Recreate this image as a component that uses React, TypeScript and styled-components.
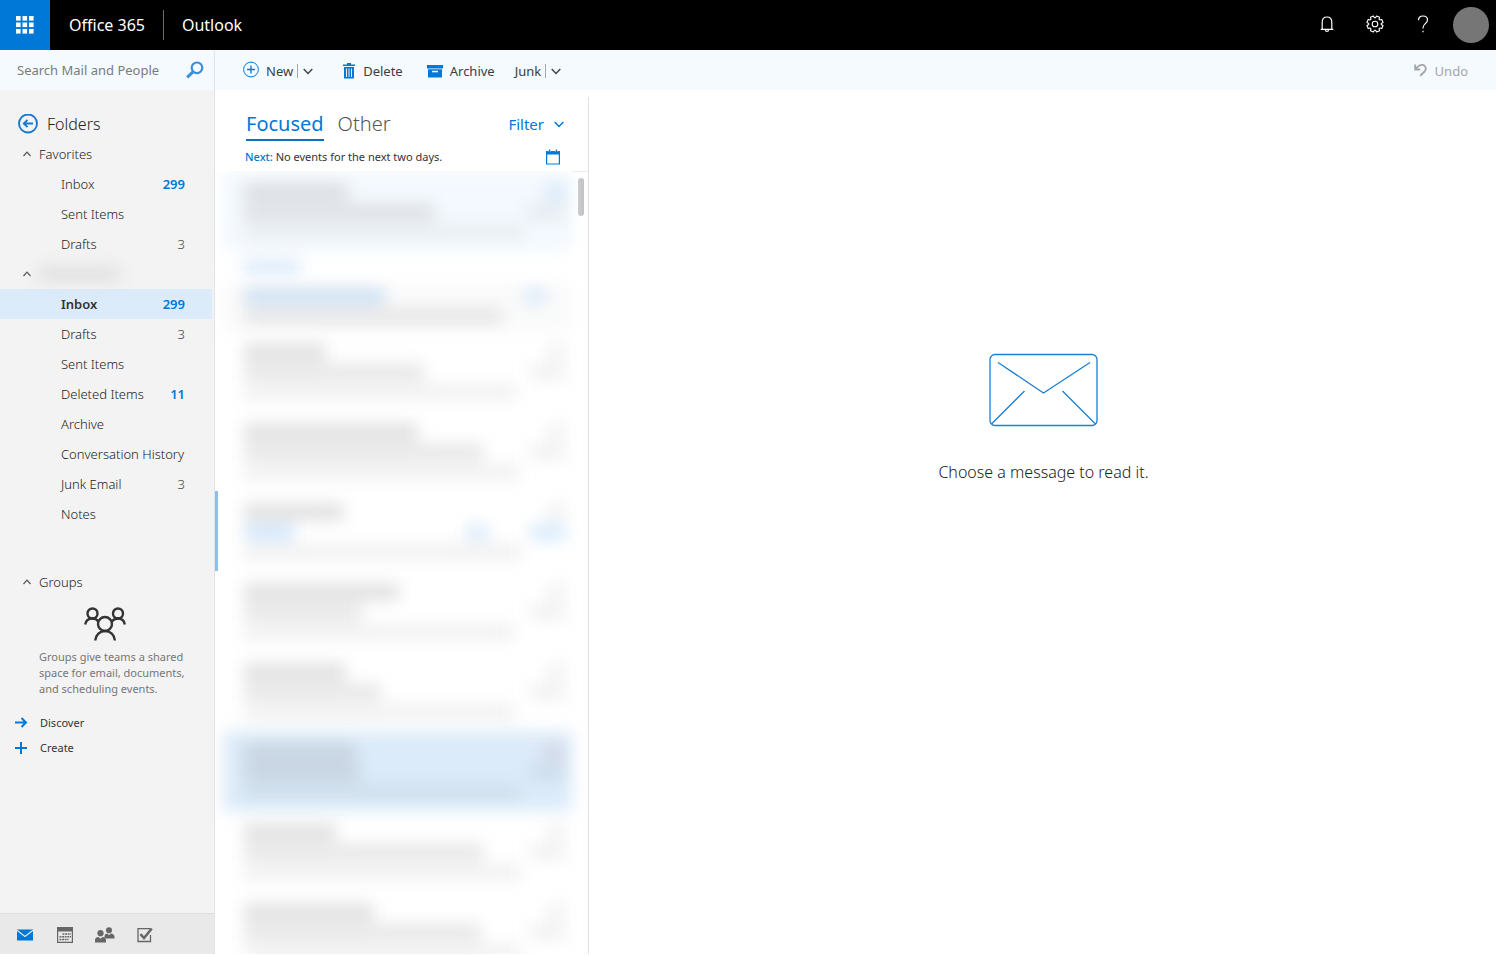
import React from "react";
import styled, { createGlobalStyle, css } from "styled-components";

const BLUE = "#0078d7";
const INK = "#444444";

const GlobalStyle = createGlobalStyle`
  * { box-sizing: border-box; }
  html, body, #root { height: 100%; }
  body {
    margin: 0;
    background: #ffffff;
    color: ${INK};
    font-family: "Noto Sans", "Open Sans", sans-serif;
    font-size: 13px;
    line-height: 20px;
  }
  button, input { font: inherit; color: inherit; }
  button { padding: 0; border: 0; background: none; cursor: pointer; }
  a { color: inherit; text-decoration: none; }
  ul { margin: 0; padding: 0; list-style: none; }
  h1, h2, p { margin: 0; font-weight: 400; }
  svg { display: block; flex: none; }
`;

const Shell = styled.div`
  display: flex;
  flex-direction: column;
  height: 100vh;
  padding-bottom: 2px;
`;

/* ---------- suite header ---------- */

const SuiteBar = styled.header`
  display: flex;
  align-items: center;
  flex: none;
  height: 50px;
  background: #000000;
  color: #ffffff;
`;

const Launcher = styled.button`
  display: flex;
  align-items: center;
  justify-content: center;
  width: 50px;
  height: 50px;
  background: ${BLUE};
`;

const SuiteLink = styled.a`
  padding: 0 18px 0 19px;
  font-size: 16px;
  line-height: 30px;
`;

const SuiteName = styled.h1`
  padding-left: 18px;
  border-left: 1px solid #6b6b6b;
  font-size: 16px;
  line-height: 30px;
`;

const SuiteActions = styled.div`
  display: flex;
  align-items: center;
  margin-left: auto;
  padding-right: 7px;
`;

const SuiteButton = styled.button`
  display: flex;
  align-items: center;
  justify-content: center;
  width: 48px;
  height: 50px;
  padding-bottom: 3px;
`;

const Avatar = styled.button`
  width: 36px;
  height: 36px;
  margin-left: 6px;
  border-radius: 50%;
  background: #767676;
`;

/* ---------- page body ---------- */

const Body = styled.div`
  display: flex;
  flex: 1;
  min-height: 0;
`;

const Sidebar = styled.aside`
  display: flex;
  flex-direction: column;
  flex: none;
  width: 215px;
  border-right: 1px solid #e1e3e6;
  background: #f3f3f3;
`;

const SearchBox = styled.form`
  display: flex;
  align-items: center;
  flex: none;
  height: 40px;
  padding: 0 10px 0 17px;
  background: #f4faff;
`;

const SearchInput = styled.input`
  flex: 1;
  min-width: 0;
  padding: 0;
  border: 0;
  outline: 0;
  background: transparent;
  &::placeholder { color: #7a7a7a; opacity: 1; }
`;

const FolderNav = styled.nav`
  flex: 1;
  min-height: 0;
  padding-top: 19px;
  overflow: hidden;
  font-weight: 300;
  color: #222222;
`;

const BackButton = styled.button`
  display: flex;
  align-items: center;
  gap: 9px;
  height: 30px;
  padding-left: 18px;
  font-size: 16px;
`;

const GroupToggle = styled.button`
  display: flex;
  align-items: center;
  gap: 8px;
  width: 100%;
  height: 30px;
  padding-left: 23px;
`;

const AccountName = styled.span`
  width: 80px;
  height: 12px;
  background: #dcdcdc;
  filter: blur(8px);
`;

const FolderLink = styled.a<{ $active?: boolean }>`
  display: flex;
  align-items: center;
  justify-content: space-between;
  height: 30px;
  margin-right: 2px;
  padding: 0 27px 0 61px;
  white-space: nowrap;
  ${(p) => p.$active && css`
    background: #dcebf9;
    color: #333333;
    font-weight: 600;
  `}
`;

const Count = styled.span<{ $unread?: boolean }>`
  color: ${(p) => (p.$unread ? BLUE : "#444444")};
  font-weight: ${(p) => (p.$unread ? 600 : 300)};
`;

const Groups = styled.section`
  padding-top: 38px;
`;

const GroupArt = styled.div`
  display: flex;
  justify-content: center;
  padding: 10px 4px 8px 0;
`;

const GroupText = styled.p`
  padding: 0 20px 13px 39px;
  color: #767676;
  font-size: 11px;
  line-height: 16px;
`;

const GroupAction = styled.button`
  display: flex;
  align-items: center;
  gap: 12px;
  height: 25px;
  padding-left: 14px;
  color: #333333;
  font-size: 11px;
  font-weight: 400;
`;

const ModuleBar = styled.nav`
  display: flex;
  align-items: center;
  gap: 20px;
  flex: none;
  height: 41px;
  padding: 2px 15px 0;
  border-top: 1px solid #dddddd;
  background: #e9e9e9;
`;

const ModuleLink = styled.a`
  display: flex;
  align-items: center;
  justify-content: center;
  width: 20px;
  height: 20px;
`;

/* ---------- main area ---------- */

const Main = styled.main`
  display: flex;
  flex-direction: column;
  flex: 1;
  min-width: 0;
`;

const CommandBar = styled.div`
  display: flex;
  align-items: center;
  flex: none;
  height: 40px;
  padding: 2px 28px 0;
  background: #f4faff;
  color: #3c3c3c;
`;

const Command = styled.button<{ $gap?: number; $after?: number }>`
  display: flex;
  align-items: center;
  gap: ${(p) => p.$gap ?? 8}px;
  margin-right: ${(p) => p.$after ?? 0}px;
`;

const SplitArrow = styled.button`
  display: flex;
  align-items: center;
  height: 14px;
  margin: 0 30px 0 4px;
  padding-left: 5px;
  border-left: 1px solid #a6a6a6;
`;

const UndoCommand = styled(Command)`
  margin-left: auto;
  color: #a6a6a6;
`;

const Panes = styled.div`
  display: flex;
  flex: 1;
  min-height: 0;
  padding-top: 7px;
`;

const ListPane = styled.section`
  display: flex;
  flex-direction: column;
  flex: none;
  width: 374px;
  border-right: 1px solid #e1e1e1;
`;

const ListHeader = styled.div`
  display: flex;
  align-items: flex-start;
  flex: none;
  height: 48px;
  padding: 12px 24px 0 31px;
`;

const Tab = styled.button<{ $active?: boolean }>`
  height: 32px;
  margin-right: 14px;
  border-bottom: 2px solid ${(p) => (p.$active ? "#106ebe" : "transparent")};
  color: ${(p) => (p.$active ? BLUE : "#555555")};
  font-size: 20px;
  font-weight: ${(p) => (p.$active ? 400 : 300)};
  line-height: 30px;
`;

const FilterButton = styled.button`
  display: flex;
  align-items: center;
  gap: 10px;
  height: 30px;
  margin-left: auto;
  color: ${BLUE};
  font-size: 15px;
`;

const Agenda = styled.div`
  display: flex;
  align-items: center;
  justify-content: space-between;
  flex: none;
  height: 26px;
  padding: 0 28px 2px 30px;
  color: #333333;
  font-size: 11px;
`;

const AgendaLabel = styled.b`
  color: ${BLUE};
  font-weight: 500;
`;

const ListViewport = styled.div`
  display: flex;
  flex: 1;
  min-height: 0;
  overflow: hidden;
`;

const MessageList = styled.ul`
  flex: 1;
  min-width: 0;
`;

const ScrollTrack = styled.div`
  flex: none;
  width: 16px;
  padding: 6px 4px 0 6px;
  border-top: 1px solid #eaeaea;
`;

const ScrollThumb = styled.div`
  height: 38px;
  border-radius: 3px;
  background: #c1c1c1;
`;

const MessageItem = styled.li<{ $marked?: boolean; $height?: number }>`
  display: grid;
  grid-template-columns: 3px 1fr;
  height: ${(p) => p.$height ?? 80}px;
  &::before {
    content: "";
    background: ${(p) => (p.$marked ? "#8fbfe9" : "transparent")};
  }
`;

const Redacted = styled.div<{ $fill?: string; $pad?: number }>`
  display: flex;
  flex-direction: column;
  margin-left: 5px;
  padding: ${(p) => p.$pad ?? 11}px 6px 0 21px;
  background: ${(p) => p.$fill ?? "transparent"};
  filter: blur(8px);
`;

const RedactedLine = styled.div`
  display: flex;
  align-items: center;
  justify-content: space-between;
  height: 20px;
`;

const Smudge = styled.span<{ $w: number; $tone: string }>`
  width: ${(p) => p.$w}px;
  height: 16px;
  background: ${(p) => p.$tone};
`;

const MidSmudge = styled(Smudge)<{ $gap: number }>`
  margin: 0 ${(p) => p.$gap}px 0 auto;
`;

const ReadingPane = styled.section`
  display: flex;
  flex-direction: column;
  align-items: center;
  flex: 1;
  padding: 256px 0 0 2px;
`;

const EmptyText = styled.p`
  margin-top: 34px;
  color: #222222;
  font-size: 16px;
  font-weight: 300;
  line-height: 22px;
`;

/* ---------- icons ---------- */

const ChevronDown = ({ color = "#444444" }: { color?: string }) => (
  <svg width="10" height="7" viewBox="0 0 10 7" fill="none" stroke={color} strokeWidth="1.5">
    <path d="M.7 1 5 5.4 9.3 1" />
  </svg>
);

const ChevronUp = () => (
  <svg width="8" height="6" viewBox="0 0 8 6" fill="none" stroke="#555555" strokeWidth="1.2">
    <path d="M.5 5 4 1.2 7.5 5" />
  </svg>
);

const WaffleIcon = () => (
  <svg width="18" height="18" viewBox="0 0 18 18" fill="#ffffff">
    {[0, 6.5, 13].map((y) => [0, 6.5, 13].map((x) => <rect key={`${x}-${y}`} x={x} y={y} width="4.6" height="4.6" />))}
  </svg>
);

const BellIcon = () => (
  <svg width="16" height="18" viewBox="0 0 16 18" fill="none" stroke="#ffffff" strokeWidth="1.2">
    <path d="M1.700 14.400h12.600M3.200 14.200V7.200C3.200 3.800 5 2 8 2s4.800 1.800 4.800 5.200v7M6.300 14.600c.2 1.400.8 1.900 1.700 1.900s1.500-.5 1.700-1.900" />
  </svg>
);

const gearPath = (() => {
  const points: string[] = [];
  for (let i = 0; i < 8; i++) {
    const base = ((i + 0.5) * Math.PI) / 4;
    [[-0.3, 6.3], [-0.2, 8.2], [0.2, 8.2], [0.3, 6.3]].forEach(([a, r]) => {
      points.push(`${(9 + r * Math.cos(base + a)).toFixed(2)} ${(9 + r * Math.sin(base + a)).toFixed(2)}`);
    });
  }
  return `M${points.join("L")}Z`;
})();

const GearIcon = () => (
  <svg width="18" height="18" viewBox="0 0 18 18" fill="none" stroke="#ffffff" strokeWidth="1.1" strokeLinejoin="round">
    <path d={gearPath} />
    <circle cx="9" cy="9" r="2.8" />
  </svg>
);

const HelpIcon = () => (
  <svg width="12" height="18" viewBox="0 0 12 18" fill="none" stroke="#ffffff" strokeWidth="1.2">
    <path d="M1.500 5.300C1.500 2.500 3.300 1 6 1s4.500 1.500 4.500 4c0 3.600-4.500 3.700-4.500 7.700v.8M6 15.800v1.400" />
  </svg>
);

const SearchIcon = () => (
  <svg width="18" height="18" viewBox="0 0 18 18" fill="none" stroke="#3a8fdc">
    <circle cx="11" cy="6.800" r="5.300" strokeWidth="2.200" />
    <path d="M7.200 10.600 1.200 16.400" strokeWidth="3" />
  </svg>
);

const BackIcon = () => (
  <svg width="20" height="20" viewBox="0 0 20 20" fill="none" stroke="#1a78cf" strokeWidth="1.900">
    <circle cx="10" cy="9.500" r="9" />
    <path d="M15 9.500H6M9.500 5.800 5.800 9.500l3.700 3.700" />
  </svg>
);

const NewIcon = () => (
  <svg width="16" height="20" viewBox="0 0 16 20" fill="none" stroke={BLUE}>
    <circle cx="8" cy="8.500" r="7.400" />
    <path d="M8 4.500v8M4 8.500h8" strokeWidth="1.300" />
  </svg>
);

const TrashIcon = () => (
  <svg width="12" height="16" viewBox="0 0 12 16" fill={BLUE}>
    <path d="M4 0h4v1.500h4V3H0V1.500h4zM1 4h10v11.500H1z" />
    <path d="M3.500 5.500v8.500M6 5.500v8.500M8.500 5.500v8.500" stroke="#ffffff" strokeWidth=".9" />
  </svg>
);

const ArchiveIcon = () => (
  <svg width="16" height="14" viewBox="0 0 16 14" fill={BLUE}>
    <path d="M0 1h16v3.600H0zM1 5.300h14v8.200H1z" />
    <path d="M5 6.800h6v1.500H5z" fill="#ffffff" />
  </svg>
);

const UndoIcon = () => (
  <svg width="13" height="16" viewBox="0 0 13 16" fill="none" stroke="#a6a6a6" strokeWidth="1.900">
    <path d="M1.200 1.500v5h5M1.500 6.200C4 3 7 1.200 9.600 2.200c2.700 1.100 2.700 4.300 1 6.300L6.200 12.800" />
  </svg>
);

const AgendaIcon = () => (
  <svg width="14" height="16" viewBox="0 0 14 16">
    <path d="M.6 3h12.800v12H.6z" fill="none" stroke={BLUE} strokeWidth="1.200" />
    <path d="M0 2h14v3.500H0zM2.800.5h1.500V3H2.800zM9.700.5h1.500V3H9.700z" fill={BLUE} />
    <path d="M2.300 1.200v1.500M4.800 1.200v1.500M9.200 1.200v1.500M11.700 1.200v1.500" stroke="#ffffff" strokeWidth=".6" />
  </svg>
);

const PeopleArt = () => (
  <svg width="42" height="34" viewBox="0 0 42 34" fill="none" stroke="#333333" strokeWidth="2.400">
    <circle cx="8.500" cy="6.500" r="5" />
    <circle cx="34" cy="6.500" r="5" />
    <circle cx="21" cy="17" r="7" />
    <path d="M1.200 17.500c.6-3.800 3.500-6 7.300-6 2.600 0 4.600 1.200 5.800 3M40.800 17.500c-.6-3.800-3.300-6-6.800-6-2.600 0-4.900 1.200-6.200 3M11.200 33.500c.5-5.500 4.700-9.500 9.900-9.500s9.400 4 9.800 9.500" />
  </svg>
);

const ArrowIcon = () => (
  <svg width="14" height="12" viewBox="0 0 14 12" fill="none" stroke={BLUE} strokeWidth="2">
    <path d="M1 5.500h11M7.500 1 12 5.500 7.500 10" />
  </svg>
);

const PlusIcon = () => (
  <svg width="14" height="12" viewBox="0 0 14 12" fill="none" stroke={BLUE} strokeWidth="2">
    <path d="M7 0v12M1 6h12" />
  </svg>
);

const MailIcon = () => (
  <svg width="16" height="12" viewBox="0 0 16 12">
    <path d="M0 .5h16v11H0z" fill={BLUE} />
    <path d="M0 1.200 8 7.400l8-6.200" fill="none" stroke="#e9e9e9" strokeWidth="1.200" />
  </svg>
);

const CalendarIcon = () => (
  <svg width="16" height="16" viewBox="0 0 16 16">
    <path d="M.6.6h14.800v14.800H.6z" fill="none" stroke="#666666" strokeWidth="1.200" />
    <path d="M0 0h16v4.500H0z" fill="#666666" />
    <path d="M5.500 7h8.500M2.500 9.700H14M2.500 12.400h9" stroke="#666666" strokeWidth="1.500" strokeDasharray="1.900 .7" />
  </svg>
);

const PeopleIcon = () => (
  <svg width="20" height="16" viewBox="0 0 20 16" fill="#666666">
    <circle cx="14" cy="3.200" r="3" />
    <path d="M9.500 11V9.500c0-2 1.400-3 3-3l1.500 1.700 1.500-1.700c2.400 0 4 1.200 4 3.500v1.500h-8z" />
    <circle cx="5.500" cy="6.200" r="3.100" />
    <path d="M0 15.500V13c0-2 1.600-3 3.500-3l2 1.700 2-1.700c2 0 3.500 1.200 3.500 3v2.500z" />
  </svg>
);

const TasksIcon = () => (
  <svg width="16" height="16" viewBox="0 0 16 16" fill="none" stroke="#666666">
    <path d="M13.500 8v6.500H1V1.700h12.500" strokeWidth="1.300" />
    <path d="M3.500 7.200 7 11l7.800-9.500" strokeWidth="2.500" />
  </svg>
);

const EnvelopeArt = () => (
  <svg width="109" height="74" viewBox="0 0 109 74" fill="none" stroke="#1b7fd4" strokeWidth="1.300">
    <rect x="1" y="1.500" width="107" height="71" rx="5" />
    <path d="M9 9.500 54.500 40 101 9.500M35.500 38 2.500 71M73.500 38l33 33" />
  </svg>
);

/* ---------- data ---------- */

type Folder = { name: string; count?: number; unread?: boolean; active?: boolean };

const favorites: Folder[] = [
  { name: "Inbox", count: 299, unread: true },
  { name: "Sent Items" },
  { name: "Drafts", count: 3 },
];

const mailbox: Folder[] = [
  { name: "Inbox", count: 299, unread: true, active: true },
  { name: "Drafts", count: 3 },
  { name: "Sent Items" },
  { name: "Deleted Items", count: 11, unread: true },
  { name: "Archive" },
  { name: "Conversation History" },
  { name: "Junk Email", count: 3 },
  { name: "Notes" },
];

const GREY = "#dfdfdf";
const PALE = "#f1f1f1";
const SKY = "#dbebfb";
const NONE = "transparent";

/* one line of a redacted message: each part has a width and a tone */
type Part = { w: number; tone: string };
type Line = { left: Part; mid?: Part & { gap: number }; right?: Part };
type Message = { fill?: string; marked?: boolean; height?: number; pad?: number; lines: Line[] };

const plain = (a: number, b: number, c: number): Message => ({
  lines: [
    { left: { w: a, tone: GREY }, right: { w: 18, tone: PALE } },
    { left: { w: b, tone: "#e6e6e6" }, right: { w: 36, tone: PALE } },
    { left: { w: c, tone: PALE } },
  ],
});

const messages: Message[] = [
  {
    fill: "#f3f9fe",
    lines: [
      { left: { w: 104, tone: "#dadde1" }, right: { w: 20, tone: "#d6e8f9" } },
      { left: { w: 191, tone: "#dde0e4" }, right: { w: 40, tone: "#e6ebf0" } },
      { left: { w: 280, tone: "#e9eef2" } },
    ],
  },
  { height: 33, pad: 6, lines: [{ left: { w: 56, tone: SKY } }] },
  {
    height: 47,
    pad: 2,
    fill: "#fafafa",
    lines: [
      { left: { w: 141, tone: "#cde0f3" }, mid: { w: 22, tone: SKY, gap: 20 } },
      { left: { w: 258, tone: "#e6e6e6" } },
    ],
  },
  plain(82, 180, 272),
  plain(174, 239, 275),
  {
    marked: true,
    lines: [
      { left: { w: 100, tone: GREY }, right: { w: 18, tone: PALE } },
      { left: { w: 50, tone: "#d2e6fa" }, mid: { w: 22, tone: SKY, gap: 42 }, right: { w: 36, tone: "#d8eafc" } },
      { left: { w: 277, tone: PALE } },
    ],
  },
  plain(155, 118, 270),
  plain(102, 137, 270),
  {
    fill: "#dcebf9",
    lines: [
      { left: { w: 112, tone: "#c5d1de" }, right: { w: 24, tone: "#d2d7e8" } },
      { left: { w: 115, tone: "#c5d1de" }, right: { w: 36, tone: "#cddceb" } },
      { left: { w: 276, tone: "#d0dfed" } },
    ],
  },
  plain(92, 239, 277),
  plain(130, 237, 277),
];

const Folders = ({ items }: { items: Folder[] }) => (
  <ul>
    {items.map((f) => (
      <li key={f.name}>
        <FolderLink href="#" $active={f.active}>
          {f.name}
          {f.count !== undefined && <Count $unread={f.unread}>{f.count}</Count>}
        </FolderLink>
      </li>
    ))}
  </ul>
);

export default function App() {
  return (
    <Shell>
      <GlobalStyle />
      <SuiteBar>
        <Launcher aria-label="App launcher"><WaffleIcon /></Launcher>
        <SuiteLink href="#">Office 365</SuiteLink>
        <SuiteName>Outlook</SuiteName>
        <SuiteActions>
          <SuiteButton aria-label="Notifications"><BellIcon /></SuiteButton>
          <SuiteButton aria-label="Settings"><GearIcon /></SuiteButton>
          <SuiteButton aria-label="Help"><HelpIcon /></SuiteButton>
          <Avatar aria-label="Account" />
        </SuiteActions>
      </SuiteBar>
      <Body>
        <Sidebar>
          <SearchBox role="search">
            <SearchInput type="text" aria-label="Search Mail and People" placeholder="Search Mail and People" />
            <button type="submit" aria-label="Search"><SearchIcon /></button>
          </SearchBox>
          <FolderNav aria-label="Folders">
            <BackButton><BackIcon />Folders</BackButton>
            <GroupToggle><ChevronUp />Favorites</GroupToggle>
            <Folders items={favorites} />
            <GroupToggle aria-label="Mailbox"><ChevronUp /><AccountName /></GroupToggle>
            <Folders items={mailbox} />
            <Groups>
              <GroupToggle><ChevronUp />Groups</GroupToggle>
              <GroupArt><PeopleArt /></GroupArt>
              <GroupText>Groups give teams a shared space for email, documents, and scheduling events.</GroupText>
              <GroupAction><ArrowIcon />Discover</GroupAction>
              <GroupAction><PlusIcon />Create</GroupAction>
            </Groups>
          </FolderNav>
          <ModuleBar aria-label="Modules">
            <ModuleLink href="#" aria-label="Mail"><MailIcon /></ModuleLink>
            <ModuleLink href="#" aria-label="Calendar"><CalendarIcon /></ModuleLink>
            <ModuleLink href="#" aria-label="People"><PeopleIcon /></ModuleLink>
            <ModuleLink href="#" aria-label="Tasks"><TasksIcon /></ModuleLink>
          </ModuleBar>
        </Sidebar>
        <Main>
          <CommandBar role="toolbar" aria-label="Message commands">
            <Command $gap={7}><NewIcon />New</Command>
            <SplitArrow aria-label="More new items"><ChevronDown /></SplitArrow>
            <Command $after={24}><TrashIcon />Delete</Command>
            <Command $gap={7} $after={20}><ArchiveIcon />Archive</Command>
            <Command>Junk</Command>
            <SplitArrow aria-label="More junk options"><ChevronDown /></SplitArrow>
            <UndoCommand><UndoIcon />Undo</UndoCommand>
          </CommandBar>
          <Panes>
            <ListPane aria-label="Messages">
              <ListHeader>
                <Tab $active>Focused</Tab>
                <Tab>Other</Tab>
                <FilterButton>Filter<ChevronDown color={BLUE} /></FilterButton>
              </ListHeader>
              <Agenda>
                <span><AgendaLabel>Next:</AgendaLabel> No events for the next two days.</span>
                <button aria-label="Open agenda"><AgendaIcon /></button>
              </Agenda>
              <ListViewport>
                <MessageList>
                  {messages.map((m, i) => (
                    <MessageItem key={i} $marked={m.marked} $height={m.height}>
                      <Redacted $fill={m.fill} $pad={m.pad}>
                        {m.lines.map(({ left, mid, right }, j) => (
                          <RedactedLine key={j}>
                            <Smudge $w={left.w} $tone={left.tone} />
                            {mid && <MidSmudge $w={mid.w} $tone={mid.tone} $gap={mid.gap} />}
                            <Smudge $w={right?.w ?? 0} $tone={right?.tone ?? NONE} />
                          </RedactedLine>
                        ))}
                      </Redacted>
                    </MessageItem>
                  ))}
                </MessageList>
                <ScrollTrack><ScrollThumb /></ScrollTrack>
              </ListViewport>
            </ListPane>
            <ReadingPane>
              <EnvelopeArt />
              <EmptyText>Choose a message to read it.</EmptyText>
            </ReadingPane>
          </Panes>
        </Main>
      </Body>
    </Shell>
  );
}
